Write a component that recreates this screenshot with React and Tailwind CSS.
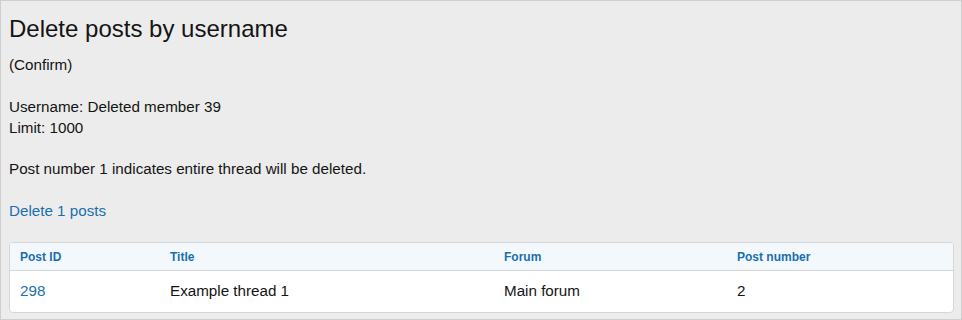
export default function App() {
  const rows = [{ id: 298, title: "Example thread 1", forum: "Main forum", num: 2 }];

  return (
    <div className="w-[962px] h-[320px] bg-[#ececec] border border-[#cfcfcf] px-[8px] pt-[12px] font-['Liberation_Sans',Arial,sans-serif] text-[#141414]">
      <h1 className="text-[24px] leading-[32px]">Delete posts by username</h1>
      <div className="mt-[9px] text-[15.2px] leading-[21px]">
        <p>(Confirm)</p>
        <p className="mt-[21px]">Username: Deleted member 39</p>
        <p>Limit: 1000</p>
        <p className="mt-[20px]">Post number 1 indicates entire thread will be deleted.</p>
        <p className="mt-[21px]">
          <a href="#" className="text-[#1a6fb0]">Delete 1 posts</a>
        </p>
      </div>
      <div className="mt-[21px] mr-[-1px] bg-white border border-[#d6d6d6] rounded-[4px] overflow-hidden">
        <div className="grid grid-cols-[150px_334px_233px_1fr] h-[28px] items-center bg-[#f3f8fd] border-b border-[#d6d6d6] text-[12px] font-bold text-[#1a6fb0]">
          <div className="pl-[10px]">Post ID</div>
          <div className="pl-[10px]">Title</div>
          <div className="pl-[10px]">Forum</div>
          <div className="pl-[10px]">Post number</div>
        </div>
        {rows.map((r) => (
          <div key={r.id} className="grid grid-cols-[150px_334px_233px_1fr] h-[41px] items-center text-[15.2px]">
            <div className="pl-[10px]">
              <a href="#" className="text-[#1a6fb0]">{r.id}</a>
            </div>
            <div className="pl-[10px]">{r.title}</div>
            <div className="pl-[10px]">{r.forum}</div>
            <div className="pl-[10px]">{r.num}</div>
          </div>
        ))}
      </div>
    </div>
  );
}
